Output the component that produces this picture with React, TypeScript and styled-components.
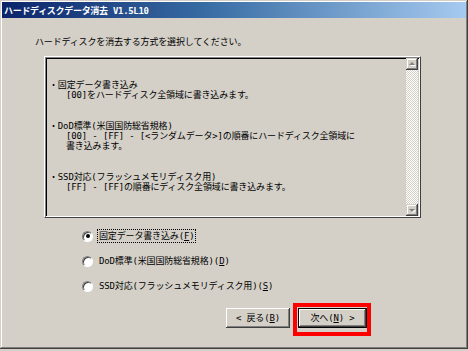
import React from "react";
import styled, { createGlobalStyle } from "styled-components";

const GlobalStyle = createGlobalStyle`
  html, body { margin: 0; padding: 0; background: #d4d0c8; }
  body { width: 468px; height: 351px; overflow: hidden; }
`;

const FONT = `"DejaVu Sans Mono", "Noto Sans CJK JP", monospace`;

const Window = styled.div`
  box-sizing: border-box;
  width: 468px;
  height: 349px;
  padding: 2px;
  background: #d4d0c8;
  box-shadow: inset -1px -1px 0 #404040, inset 1px 1px 0 #d4d0c8,
    inset -2px -2px 0 #808080, inset 2px 2px 0 #ffffff;
  display: flex;
  flex-direction: column;
  font-family: ${FONT};
  font-size: 9px;
  letter-spacing: -0.15px;
  color: #000;
`;

const TitleBar = styled.div`
  height: 16px;
  display: flex;
  align-items: center;
  padding-left: 2px;
  background: linear-gradient(to right, #0a246a 0%, #3a6ea5 45%, #a6caf0 100%);
  color: #fff;
  font-weight: bold;
  font-size: 9px;
  letter-spacing: -0.3px;
  white-space: nowrap;
`;

const Prompt = styled.div`
  margin: 18px 0 0 33px;
  line-height: 12px;
  height: 12px;
  white-space: nowrap;
`;

const Panel = styled.div`
  box-sizing: border-box;
  margin: 8px 0 0 42px;
  width: 377px;
  height: 162px;
  display: flex;
  border: 1px solid;
  border-color: #ffffff #404040 #404040 #ffffff;
  box-shadow: inset 1px 1px 0 #808080, inset -1px -1px 0 #ffffff,
    inset 2px 2px 0 #000000, inset -2px -2px 0 #d4d0c8;
  padding: 2px;
`;

const TextArea = styled.div`
  flex: 1;
  padding: 21px 0 0 2px;
  display: flex;
  flex-direction: column;
  gap: 21px;
`;

const Group = styled.div`
  display: flex;
  flex-direction: column;
  line-height: 10px;
  white-space: nowrap;
`;

const Heading = styled.div``;

const Detail = styled.div`
  padding-left: 17px;
`;

const Scrollbar = styled.div`
  width: 12px;
  margin: -1px 0 -1px 0;
  display: flex;
  flex-direction: column;
  background: repeating-conic-gradient(#ffffff 0 25%, #d4d0c8 0 50%) 0 0 / 2px 2px;
`;

const ScrollButton = styled.div<{ $dir: "up" | "down" }>`
  width: 12px;
  height: 12px;
  box-sizing: border-box;
  background: #d4d0c8;
  box-shadow: inset -1px -1px 0 #404040, inset 1px 1px 0 #d4d0c8,
    inset -2px -2px 0 #808080, inset 2px 2px 0 #ffffff;
  display: flex;
  align-items: center;
  justify-content: center;
  &::before {
    content: "";
    width: 0;
    height: 0;
    border-left: 3px solid transparent;
    border-right: 3px solid transparent;
    ${(p) =>
      p.$dir === "up"
        ? "border-bottom: 3px solid #808080; margin-top: -1px;"
        : "border-top: 3px solid #808080; margin-top: 1px;"}
    filter: drop-shadow(1px 1px 0 #ffffff);
  }
`;

const Track = styled.div`
  flex: 1;
`;

const RadioGroup = styled.div`
  margin: 11px 0 0 80px;
  display: flex;
  flex-direction: column;
  gap: 11px;
`;

const RadioRow = styled.div`
  height: 14px;
  display: flex;
  align-items: center;
  gap: 4px;
`;

const RadioCircle = styled.span<{ $checked?: boolean }>`
  box-sizing: border-box;
  width: 11px;
  height: 11px;
  border-radius: 50%;
  background: #ffffff;
  border: 1px solid;
  border-color: #808080 #ffffff #ffffff #808080;
  box-shadow: inset 1px 1px 0 #404040, 0 0 0 0.5px #d4d0c8;
  display: flex;
  align-items: center;
  justify-content: center;
  &::after {
    content: "";
    width: 4px;
    height: 4px;
    border-radius: 50%;
    background: ${(p) => (p.$checked ? "#000" : "transparent")};
  }
`;

const RadioLabel = styled.span<{ $focused?: boolean }>`
  box-sizing: border-box;
  height: 14px;
  line-height: 12px;
  padding: 0 1px;
  border: 1px dotted ${(p) => (p.$focused ? "#000" : "transparent")};
  white-space: nowrap;
`;

const ButtonRow = styled.div`
  margin: 15px 0 0 224px;
  display: flex;
  gap: 8px;
`;

const Button = styled.div<{ $width: number; $default?: boolean }>`
  position: relative;
  box-sizing: border-box;
  width: ${(p) => p.$width}px;
  height: 20px;
  display: flex;
  align-items: center;
  justify-content: center;
  background: #d4d0c8;
  white-space: nowrap;
  line-height: 12px;
  ${(p) =>
    p.$default
      ? `border: 1px solid #000;
         box-shadow: inset -1px -1px 0 #404040, inset 1px 1px 0 #ffffff,
           inset -2px -2px 0 #808080, inset 2px 2px 0 #d4d0c8;`
      : `box-shadow: inset -1px -1px 0 #404040, inset 1px 1px 0 #ffffff,
           inset -2px -2px 0 #808080, inset 2px 2px 0 #d4d0c8;`}
`;

const Highlight = styled.span`
  position: absolute;
  top: -6px;
  left: -6px;
  right: -5px;
  bottom: -9px;
  border: 4px solid #ff0000;
  pointer-events: none;
`;

export default function App() {
  return (
    <>
      <GlobalStyle />
      <Window>
        <TitleBar>ハードディスクデータ消去 V1.5L10</TitleBar>
        <Prompt>ハードディスクを消去する方式を選択してください。</Prompt>
        <Panel>
          <TextArea>
            <Group>
              <Heading>・固定データ書き込み</Heading>
              <Detail>[00]をハードディスク全領域に書き込みます。</Detail>
            </Group>
            <Group>
              <Heading>・DoD標準(米国国防総省規格)</Heading>
              <Detail>[00] - [FF] - [&lt;ランダムデータ&gt;]の順番にハードディスク全領域に</Detail>
              <Detail>書き込みます。</Detail>
            </Group>
            <Group>
              <Heading>・SSD対応(フラッシュメモリディスク用)</Heading>
              <Detail>[FF] - [FF]の順番にディスク全領域に書き込みます。</Detail>
            </Group>
          </TextArea>
          <Scrollbar>
            <ScrollButton $dir="up" />
            <Track />
            <ScrollButton $dir="down" />
          </Scrollbar>
        </Panel>
        <RadioGroup>
          <RadioRow>
            <RadioCircle $checked />
            <RadioLabel $focused>
              固定データ書き込み(<u>F</u>)
            </RadioLabel>
          </RadioRow>
          <RadioRow>
            <RadioCircle />
            <RadioLabel>
              DoD標準(米国国防総省規格)(<u>D</u>)
            </RadioLabel>
          </RadioRow>
          <RadioRow>
            <RadioCircle />
            <RadioLabel>
              SSD対応(フラッシュメモリディスク用)(<u>S</u>)
            </RadioLabel>
          </RadioRow>
        </RadioGroup>
        <ButtonRow>
          <Button $width={64}>
            &lt; 戻る(<u>B</u>)
          </Button>
          <Button $width={69} $default>
            次へ(<u>N</u>) &gt;
            <Highlight />
          </Button>
        </ButtonRow>
      </Window>
    </>
  );
}
